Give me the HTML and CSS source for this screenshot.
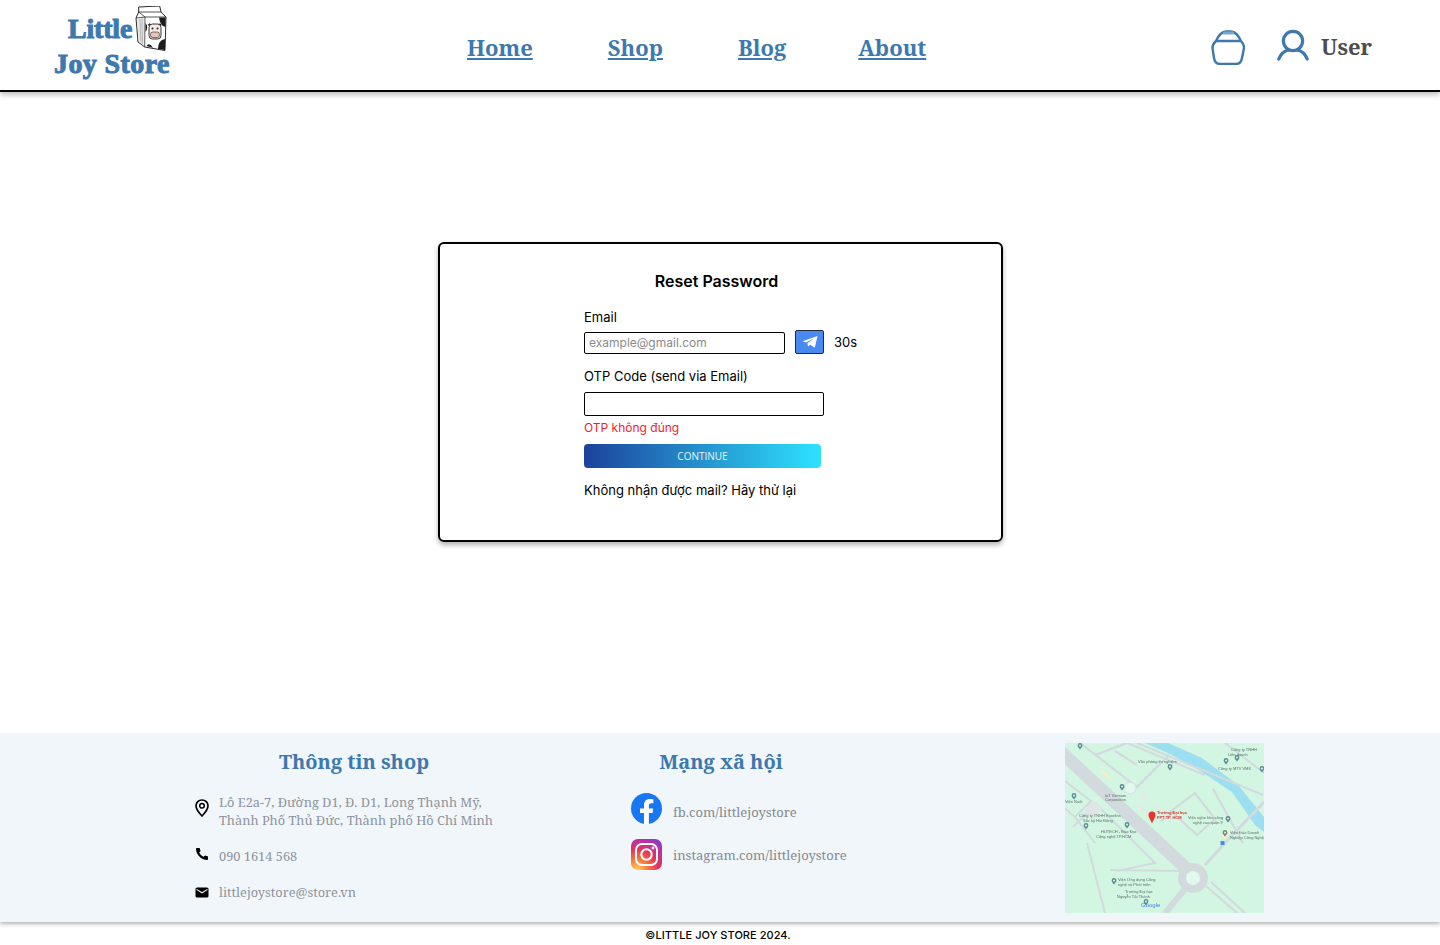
FILE: index.html
```html
<!DOCTYPE html>
<html lang="en">
<head>
    <meta charset="UTF-8">
    <meta name="viewport" content="width=device-width, initial-scale=1.0">
    <title>Little Joy Store - Reset Password</title>
    <link rel="stylesheet" href="styles.css">
</head>
<body>
    <header class="header">
        <a class="logo" href="#">
            <span class="logo-top">
                <span class="logo-word">Little</span>
                <svg class="logo-carton" viewBox="0 0 33 46" aria-hidden="true">
                    <path d="M4.7 1 L25.7 0 L27 6 L32 11 L31 44.5 L10.7 41 L4 36 L2 12 L4.7 6 Z" fill="#fff" stroke="#2a2a2a" stroke-width="1"/>
                    <path d="M4.7 6 L27 6 M2 12 L11 11 L32 11 M11 11 L10.7 41 M4.7 6 L11 11" fill="none" stroke="#2a2a2a" stroke-width="0.8"/>
                    <path d="M3 13 L10 12 L9.8 39.5 L5 35.5 Z" fill="#e4e4e4"/>
                    <path d="M6 13 L7 36 M8 12.5 L8.5 38" stroke="#8a8a8a" stroke-width="0.5" fill="none"/>
                    <path d="M25 11.5 L31.6 11.5 L31.4 21 Q26 20 25 11.5 Z M31.2 33 L31 44 L24 43 Q24 34 31.2 33 Z M11.5 17 Q15 21 11.5 26 Z M12.5 40 Q15 36 19 41.8 Z" fill="#1c1c1c"/>
                    <path d="M13.5 19 L16 17 L16.5 20.5 Z M28 19 L25.6 17 L25 20.5 Z" fill="#2a2a2a"/>
                    <rect x="15" y="18" width="12" height="15" rx="3.5" fill="#f6ece6" stroke="#222" stroke-width="0.9"/>
                    <circle cx="18.5" cy="22.5" r="1" fill="#222"/>
                    <circle cx="23.5" cy="22.5" r="1" fill="#222"/>
                    <rect x="16.5" y="26" width="9" height="5.5" rx="2.4" fill="#e9c4b8" stroke="#222" stroke-width="0.6"/>
                </svg>
            </span>
            <span class="logo-word logo-bottom">Joy Store</span>
        </a>
        <nav class="nav">
            <a href="#">Home</a>
            <a href="#">Shop</a>
            <a href="#">Blog</a>
            <a href="#">About</a>
        </nav>
        <div class="header-right">
            <svg class="icon-bag" viewBox="0 0 34 36" aria-hidden="true">
                <path d="M5 12 Q9 3 15 2.5 H20 Q26 3 30 12 Q33 15 33 19 L31 29 Q30 35 25 35 H9 Q4 35 3 29 L1.5 19 Q1.5 15 5 12 Z M5 12 H30" fill="none" stroke="#3d78ae" stroke-width="2.4" stroke-linejoin="round"/>
                <rect x="12" y="2.5" width="11" height="3" rx="1.2" fill="#7ba4c9"/>
            </svg>
            <svg class="icon-user" viewBox="0 0 32 32" aria-hidden="true">
                <circle cx="16" cy="12" r="9.6" fill="none" stroke="#3d78ae" stroke-width="3.2"/>
                <path d="M1.8 30 Q5 22 12 21 M30.2 30 Q27 22 20 21" fill="none" stroke="#3d78ae" stroke-width="3.2" stroke-linecap="round"/>
            </svg>
            <span class="user-name">User</span>
        </div>
    </header>

    <main class="main">
        <form class="card">
            <h1 class="card-title">Reset Password</h1>
            <label class="field-label" for="email">Email</label>
            <div class="email-row">
                <input class="input input-email" type="text" id="email" placeholder="example@gmail.com">
                <button class="send-btn" type="button" aria-label="Send">
                    <svg viewBox="0 0 16 14" width="16" height="14" aria-hidden="true">
                        <path d="M15.5 1 L12.8 12.8 L8.2 9.8 L6 11.6 L5.4 8.2 L12 3.4 L3.8 7.4 L0.5 6.2 Z" fill="#fff"/>
                    </svg>
                </button>
                <span class="timer">30s</span>
            </div>
            <label class="field-label otp-label" for="otp">OTP Code (send via Email)</label>
            <input class="input input-otp" type="text" id="otp">
            <p class="error">OTP không đúng</p>
            <button class="continue-btn" type="button">CONTINUE</button>
            <p class="retry">Không nhận được mail? Hãy thử lại</p>
        </form>
    </main>

    <footer class="footer">
        <section class="shop-info">
            <h2 class="footer-title">Thông tin shop</h2>
            <div class="info-row info-address">
                <svg viewBox="0 0 14 18" width="14" height="18" aria-hidden="true">
                    <path d="M7 1 C3.6 1 1 3.6 1 6.8 C1 10.8 7 17 7 17 C7 17 13 10.8 13 6.8 C13 3.6 10.4 1 7 1 Z" fill="none" stroke="#000" stroke-width="1.7"/>
                    <circle cx="7" cy="6.8" r="2.3" fill="none" stroke="#000" stroke-width="1.5"/>
                </svg>
                <span>Lô E2a-7, Đường D1, Đ. D1, Long Thạnh Mỹ,<br>Thành Phố Thủ Đức, Thành phố Hồ Chí Minh</span>
            </div>
            <div class="info-row info-phone">
                <svg viewBox="0 0 14 14" width="14" height="14" aria-hidden="true">
                    <path d="M2 1 L4.6 1 L5.6 4 L4.2 5.4 C5 7.2 6.6 8.8 8.6 9.8 L10 8.4 L13 9.4 L13 12 C13 12.6 12.6 13 12 13 C6 12.6 1.4 8 1 2 C1 1.4 1.4 1 2 1 Z" fill="#000"/>
                </svg>
                <span>090 1614 568</span>
            </div>
            <div class="info-row info-mail">
                <svg viewBox="0 0 14 11" width="14" height="11" aria-hidden="true">
                    <rect x="0.5" y="0.5" width="13" height="10" rx="1.6" fill="#000"/>
                    <path d="M1.5 2.4 L7 5.8 L12.5 2.4" fill="none" stroke="#f1f6fb" stroke-width="1.1"/>
                </svg>
                <span>littlejoystore@store.vn</span>
            </div>
        </section>

        <section class="social">
            <h2 class="footer-title">Mạng xã hội</h2>
            <a class="social-row social-fb" href="#">
                <svg viewBox="0 0 31 31" width="31" height="31" aria-hidden="true">
                    <circle cx="15.5" cy="15.5" r="15.5" fill="#1877f2"/>
                    <path d="M21.5 20 L22.2 15.5 H17.9 V12.6 C17.9 11.4 18.5 10.2 20.4 10.2 H22.4 V6.4 C22.4 6.4 20.6 6.1 18.9 6.1 C15.4 6.1 13 8.2 13 12.1 V15.5 H9 V20 H13 V31 C13.8 31 14.7 31 15.5 31 C16.3 31 17.1 31 17.9 31 V20 Z" fill="#fff"/>
                </svg>
                <span>fb.com/littlejoystore</span>
            </a>
            <a class="social-row social-ig" href="#">
                <svg viewBox="0 0 31 31" width="31" height="31" aria-hidden="true">
                    <defs>
                        <radialGradient id="ig" cx="0.2" cy="1" r="1.25">
                            <stop offset="0" stop-color="#fdd25a"/>
                            <stop offset="0.3" stop-color="#f5743a"/>
                            <stop offset="0.55" stop-color="#e0335e"/>
                            <stop offset="0.8" stop-color="#b52fb0"/>
                            <stop offset="1" stop-color="#5b4fd0"/>
                        </radialGradient>
                    </defs>
                    <rect width="31" height="31" rx="7" fill="url(#ig)"/>
                    <rect x="5" y="5" width="21" height="21" rx="6" fill="none" stroke="#fff" stroke-width="2"/>
                    <circle cx="15.5" cy="15.5" r="5.2" fill="none" stroke="#fff" stroke-width="2"/>
                    <circle cx="22" cy="9" r="1.4" fill="#fff"/>
                </svg>
                <span>instagram.com/littlejoystore</span>
            </a>
        </section>

        <svg class="map" viewBox="0 0 199 170" aria-label="Map">
            <defs>
                <path id="pin" d="M0 3.6 C-1 2 -2.4 1 -2.4 -0.6 A2.4 2.4 0 0 1 2.4 -0.6 C2.4 1 1 2 0 3.6 Z M0 -1.6 A1 1 0 1 0 0.01 -1.6 Z" fill-rule="evenodd"/>
            </defs>
            <rect width="199" height="170" fill="#d2f6e2"/>
            <path d="M80 0 L103 0 L137 15 L173 42 L199 74 L199 89 L190 82 L167 49 L137 29 L107 12 Z" fill="#9cdff0"/>
            <g fill="none" stroke="#d3dade">
                <path d="M-4 9 L123 127" stroke-width="13"/>
                <path d="M120 146 L100 170" stroke-width="6"/>
                <path d="M140 122 L160 100 L199 59" stroke-width="3"/>
                <path d="M141 143 L172 170 M146 139 L180 170" stroke-width="2"/>
                <path d="M15 0 L72 44 L104 12 M30 12 L62 0 M50 8 L72 22 M72 0 L198 52 M62 0 L140 32" stroke-width="2.2"/>
                <path d="M130 50 L106 68 L132 92 L150 76 Z M148 46 L178 100 M108 70 L96 78" stroke-width="2.2"/>
                <path d="M0 38 L26 58 L10 74 L-4 62 M30 60 L90 120 L52 128 M22 100 L40 170 M10 74 L30 100 M45 127 L117 128" stroke-width="2"/>
                <path d="M30 62 L8 84 M160 0 L199 30" stroke-width="2"/>
            </g>
            <circle cx="65" cy="45" r="6" fill="#e3f8ec" stroke="#d3dade" stroke-width="1"/>
            <rect x="22" y="60" width="12" height="14" fill="#dfe5e6" transform="rotate(42 28 67)"/>
            <path d="M38 27 L46 34 L44 36 L36 29 Z M155 92 L163 85 L166 88 L160 96 Z" fill="#f6eec8"/>
            <path d="M76 50 L82 56 M72 62 L78 68 M80 68 L92 78 M90 62 L102 72" stroke="#e6e9e4" stroke-width="3" fill="none"/>
            <circle cx="128" cy="135" r="11" fill="#e0f9ed" stroke="#d3dade" stroke-width="8"/>
            <rect x="155.5" y="98" width="4" height="4" rx="0.6" fill="#4a8ee0"/>
            <path d="M87 80.5 C85 75.5 83.5 74.5 83.5 72 A3.5 3.5 0 0 1 90.5 72 C90.5 74.5 89 75.5 87 80.5 Z" fill="#e8352b"/>
            <g fill="#5c8d92">
                <use href="#pin" x="15" y="3"/><use href="#pin" x="105" y="24"/><use href="#pin" x="161" y="18"/>
                <use href="#pin" x="172" y="15"/><use href="#pin" x="197" y="26"/><use href="#pin" x="57" y="44"/>
                <use href="#pin" x="9" y="53"/><use href="#pin" x="21" y="83"/><use href="#pin" x="62" y="82"/>
                <use href="#pin" x="163" y="76"/><use href="#pin" x="160" y="90"/><use href="#pin" x="49" y="138"/>
                <use href="#pin" x="81" y="159"/>
            </g>
            <g class="map-labels">
                <text x="92" y="71" class="map-red">Trường Đại học</text>
                <text x="92" y="76" class="map-red">FPT TP. HCM</text>
                <text x="73" y="20">Văn phòng thi nghiệm</text>
                <text x="166" y="8">Công ty TNHH</text>
                <text x="163" y="13">Liên doanh</text>
                <text x="153" y="27">Công ty MTV VMK</text>
                <text x="40" y="54">IoT Vietnam</text>
                <text x="40" y="58">Corporation</text>
                <text x="0" y="60">Viện Nuôi</text>
                <text x="14" y="74">Công ty TNHH Eurofins</text>
                <text x="18" y="79">Sắc ký Hải Đăng</text>
                <text x="36" y="90">HUTECH - Đào Đạc</text>
                <text x="31" y="95">Công nghệ TP.HCM</text>
                <text x="123" y="76">Viện nghe khu công</text>
                <text x="128" y="81">nghệ cao quận 9</text>
                <text x="165" y="91">Viện Đào Doanh</text>
                <text x="165" y="96">Nghiệp Công Nghệ</text>
                <text x="53" y="138">Viện Ứng dụng Công</text>
                <text x="53" y="143">nghệ và Phát triển</text>
                <text x="60" y="150">Trường Đại học</text>
                <text x="52" y="155">Nguyễn Tất Thành</text>
                <text x="76" y="164" class="map-google">Google</text>
            </g>
        </svg>
    </footer>

    <p class="copyright">©LITTLE JOY STORE 2024.</p>
</body>
</html>
```

FILE: styles.css
```css
* {
    box-sizing: border-box;
}
body {
    margin: 0;
    height: 945px;
    overflow: hidden;
    display: flex;
    flex-direction: column;
    background-color: #ffffff;
    font-family: 'Inter', sans-serif;
    color: #000000;
}
a {
    color: inherit;
}
.header {
    height: 92px;
    flex-shrink: 0;
    display: flex;
    align-items: flex-start;
    border-bottom: 2px solid #000000;
    box-shadow: 0 3px 5px rgba(0, 0, 0, 0.25);
    padding-left: 54px;
    position: relative;
}
.logo {
    width: 413px;
    padding-top: 6px;
    display: flex;
    flex-direction: column;
    text-decoration: none;
    color: #3d78ae;
}
.logo-top {
    display: flex;
    align-items: flex-start;
    padding-left: 14px;
    height: 46px;
    gap: 2px;
}
.logo-word {
    font-family: 'Liberation Serif', serif;
    font-weight: 700;
    font-size: 28px;
    line-height: 30px;
    letter-spacing: 0.4px;
    -webkit-text-stroke: 1px #3d78ae;
}
.logo-top .logo-word {
    padding-top: 8px;
    letter-spacing: -0.2px;
}
.logo-bottom {
    margin-top: -3px;
}
.logo-carton {
    width: 33px;
    height: 46px;
}
.nav {
    display: flex;
    gap: 75px;
    padding-top: 31px;
    width: 744px;
    font-family: 'Noto Serif', 'DejaVu Serif Condensed', serif;
    font-size: 22px;
    font-weight: 700;
    line-height: 32px;
    color: #3d78ae;
}
.nav a:last-child {
    margin-left: -3px;
}
.header-right {
    display: flex;
    align-items: flex-start;
    padding-top: 29px;
}
.icon-bag {
    width: 34px;
    height: 36px;
    margin-right: 32px;
}
.icon-user {
    width: 32px;
    height: 32px;
    margin-right: 12px;
}
.user-name {
    font-family: 'Noto Serif', 'DejaVu Serif Condensed', serif;
    font-size: 22px;
    font-weight: 700;
    line-height: 34px;
    color: #4d4d4d;
}

.main {
    flex: 1;
    padding-top: 150px;
}
.card {
    width: 565px;
    height: 300px;
    margin-left: 438px;
    padding: 25px 0 0 144px;
    border: 2px solid #000000;
    border-radius: 6px;
    box-shadow: 0 3px 5px rgba(0, 0, 0, 0.3);
}
.card-title {
    width: 265px;
    margin: 0 0 15px;
    font-size: 16px;
    font-weight: 600;
    line-height: 24px;
    text-align: center;
}
.field-label {
    display: block;
    font-size: 13px;
    line-height: 18px;
}
.email-row {
    display: flex;
    align-items: flex-end;
    gap: 10px;
    margin-top: 4px;
}
.input {
    display: block;
    border: 1px solid #000000;
    border-radius: 2px;
    padding: 0 4px;
    font-family: 'Inter', sans-serif;
    font-size: 12px;
    background: #ffffff;
}
.input::placeholder {
    color: #8a8a8a;
    opacity: 1;
}
.input-email {
    width: 201px;
    height: 22px;
    padding-bottom: 2px;
}
.send-btn {
    width: 29px;
    height: 24px;
    padding: 0;
    display: flex;
    align-items: center;
    justify-content: center;
    background-color: #4a8af0;
    border: 1px solid #1d2b3d;
    border-radius: 2px;
}
.timer {
    align-self: center;
    font-size: 13px;
}
.otp-label {
    margin-top: 13px;
}
.input-otp {
    width: 240px;
    height: 24px;
    margin-top: 7px;
}
.error {
    margin: 4px 0 0;
    color: #f0222c;
    font-size: 12px;
    line-height: 16px;
}
.continue-btn {
    display: block;
    width: 237px;
    height: 24px;
    margin-top: 8px;
    padding: 0;
    border: none;
    border-radius: 4px;
    background: linear-gradient(90deg, #1c429c 0%, #2de3ff 100%);
    color: #e8f6fb;
    font-family: 'Open Sans', sans-serif;
    font-size: 10px;
}
.retry {
    margin: 13px 0 0;
    font-size: 13px;
    line-height: 18px;
}

.footer {
    height: 188px;
    flex-shrink: 0;
    display: flex;
    background-color: #f1f6fb;
    box-shadow: 0 2px 4px rgba(0, 0, 0, 0.3);
    padding-left: 195px;
    font-family: 'Noto Serif', 'DejaVu Serif Condensed', serif;
    font-size: 12.8px;
    color: #8d949b;
    position: relative;
}
.footer-title {
    margin: 0;
    padding-top: 13px;
    height: 46px;
    font-size: 20px;
    font-weight: 700;
    line-height: 30px;
    color: #3d78ae;
    text-align: center;
}
.shop-info {
    width: 436px;
}
.shop-info .footer-title {
    width: 318px;
}
.info-row {
    display: flex;
    gap: 10px;
    line-height: 18px;
}
.info-row svg {
    flex-shrink: 0;
}
.info-address {
    margin-top: 13px;
}
.info-address svg {
    margin-top: 6px;
}
.info-phone {
    margin-top: 18px;
}
.info-mail {
    margin-top: 18px;
    align-items: center;
}
.social {
    width: 434px;
    font-size: 13px;
}
.social .footer-title {
    width: 180px;
}
.social-row {
    display: flex;
    align-items: center;
    gap: 11px;
    height: 31px;
    text-decoration: none;
    color: #85898e;
}
.social-fb {
    margin-top: 13px;
}
.social-fb span {
    padding-top: 7px;
}
.social-ig {
    margin-top: 15px;
}
.map {
    width: 199px;
    height: 170px;
    margin-top: 9px;
    filter: blur(0.4px);
}
.map-labels {
    font-family: 'Liberation Sans', sans-serif;
    font-size: 4px;
    fill: #5c6f6a;
}
.map-labels .map-red {
    fill: #d8352b;
    font-weight: 700;
}
.map-labels .map-google {
    fill: #4a80dd;
    font-size: 6px;
}
.copyright {
    height: 23px;
    flex-shrink: 0;
    margin: 0;
    padding: 5px 4px 0 0;
    text-align: center;
    font-size: 11px;
    font-weight: 500;
    line-height: 16px;
    letter-spacing: 0.05px;
}
```
